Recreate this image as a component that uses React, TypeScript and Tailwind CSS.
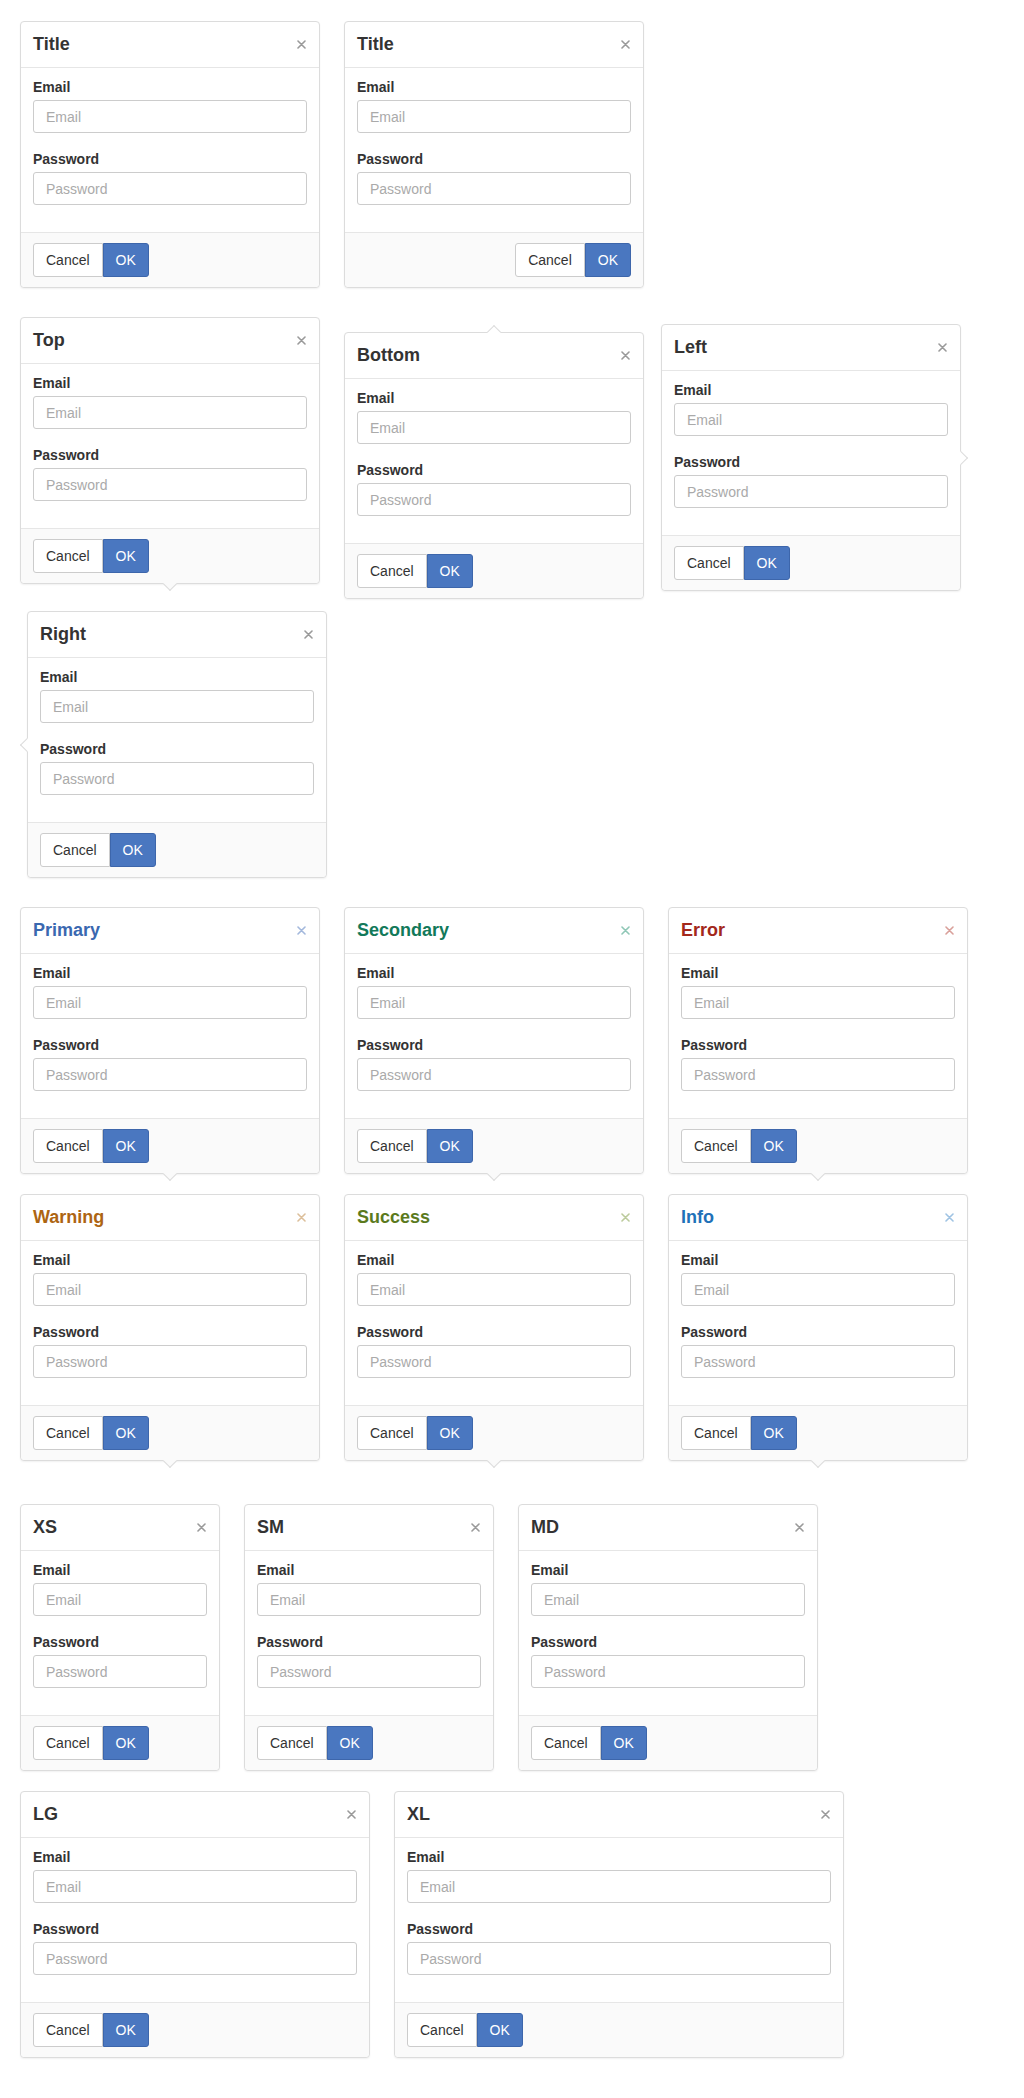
import React from 'react'

type Placement = 'none' | 'top' | 'bottom' | 'left' | 'right'
type Tone = 'default' | 'primary' | 'secondary' | 'error' | 'warning' | 'success' | 'info'

const toneStyles: Record<Tone, { title: string; close: string }> = {
  default: { title: 'text-[#333333]', close: 'text-[#9a9a9a]' },
  primary: { title: 'text-[#3a68b0]', close: 'text-[#a3b8dc]' },
  secondary: { title: 'text-[#12795a]', close: 'text-[#8fc7b6]' },
  error: { title: 'text-[#a3281b]', close: 'text-[#d9a09a]' },
  warning: { title: 'text-[#ad6512]', close: 'text-[#dcbf9b]' },
  success: { title: 'text-[#5b7a1d]', close: 'text-[#bccb9c]' },
  info: { title: 'text-[#1f71b8]', close: 'text-[#9fc3e3]' },
}

// offsets that leave room for the arrow, like a placed popover
const placementMargin: Record<Placement, string> = {
  none: '',
  top: '-mt-[7px] mb-[7px]',
  bottom: 'mt-[8px] -mb-[8px]',
  left: '-ml-[7px] mr-[7px]',
  right: 'ml-[7px] -mr-[7px]',
}

function Arrow({ placement }: { placement: Placement }) {
  if (placement === 'top') {
    return (
      <span className="absolute left-1/2 -bottom-[6px] w-[10px] h-[10px] -translate-x-1/2 rotate-45 bg-[#fafafa] border-r border-b border-[#dcdcdc]" />
    )
  }
  if (placement === 'bottom') {
    return (
      <span className="absolute left-1/2 -top-[6px] w-[10px] h-[10px] -translate-x-1/2 rotate-45 bg-white border-l border-t border-[#dcdcdc]" />
    )
  }
  if (placement === 'left') {
    return (
      <span className="absolute top-1/2 -right-[6px] w-[10px] h-[10px] -translate-y-1/2 rotate-45 bg-white border-t border-r border-[#dcdcdc]" />
    )
  }
  if (placement === 'right') {
    return (
      <span className="absolute top-1/2 -left-[6px] w-[10px] h-[10px] -translate-y-1/2 rotate-45 bg-white border-b border-l border-[#dcdcdc]" />
    )
  }
  return null
}

function CloseIcon({ className }: { className: string }) {
  return (
    <svg className={className} width="9" height="9" viewBox="0 0 9 9" fill="none">
      <path d="M1 1L8 8M8 1L1 8" stroke="currentColor" strokeWidth="1.6" strokeLinecap="round" />
    </svg>
  )
}

function Field({ label, placeholder, type }: { label: string; placeholder: string; type: string }) {
  return (
    <div>
      <label className="block text-[14px] leading-[18px] font-bold text-[#333333] mb-[4px]">{label}</label>
      <input
        type={type}
        placeholder={placeholder}
        className="block w-full h-[33px] px-[12px] border border-[#cccccc] rounded-[3px] bg-white text-[14px] text-[#333333] placeholder:text-[#aaaaaa] outline-none"
      />
    </div>
  )
}

interface PopoverProps {
  title: string
  width?: string
  placement?: Placement
  tone?: Tone
  footerEnd?: boolean
}

function Popover({ title, width = 'w-[300px]', placement = 'none', tone = 'default', footerEnd = false }: PopoverProps) {
  const t = toneStyles[tone]
  return (
    <div
      className={`relative ${width} ${placementMargin[placement]} shrink-0 bg-white border border-[#dcdcdc] rounded-[4px] shadow-[0_1px_2px_rgba(0,0,0,0.06)]`}
    >
      <div className="h-[46px] px-[12px] flex items-center justify-between border-b border-[#e6e6e6]">
        <h3 className={`text-[18px] font-bold ${t.title}`}>{title}</h3>
        <CloseIcon className={`${t.close} mr-[1px]`} />
      </div>
      <div className="px-[12px] pt-[10px] pb-[27px] flex flex-col gap-[17px]">
        <Field label="Email" placeholder="Email" type="email" />
        <Field label="Password" placeholder="Password" type="password" />
      </div>
      <div
        className={`flex ${footerEnd ? 'justify-end' : 'justify-start'} px-[12px] py-[10px] bg-[#fafafa] border-t border-[#e6e6e6] rounded-b-[4px]`}
      >
        <button className="h-[34px] px-[12px] text-[14px] text-[#333333] bg-white border border-[#cccccc] rounded-l-[3px]">
          Cancel
        </button>
        <button className="h-[34px] px-[12px] text-[14px] text-white bg-[#4a77c0] border border-[#3d66ab] rounded-r-[3px]">
          OK
        </button>
      </div>
      <Arrow placement={placement} />
    </div>
  )
}

export default function App() {
  return (
    <div className="min-h-[2098px] bg-white pt-[21px] pl-[20px] pb-[40px] flex flex-col gap-[36px] font-['Liberation_Sans',Arial,sans-serif]">
      <section className="flex flex-wrap gap-x-[24px] gap-y-[20px]">
        <Popover title="Title" />
        <Popover title="Title" footerEnd />
      </section>

      <section className="flex flex-wrap items-start gap-x-[24px] gap-y-[20px]">
        <Popover title="Top" placement="top" />
        <Popover title="Bottom" placement="bottom" />
        <Popover title="Left" placement="left" />
        <Popover title="Right" placement="right" />
      </section>

      <section className="flex flex-wrap items-start gap-x-[24px] gap-y-[20px]">
        <Popover title="Primary" placement="top" tone="primary" />
        <Popover title="Secondary" placement="top" tone="secondary" />
        <Popover title="Error" placement="top" tone="error" />
        <Popover title="Warning" placement="top" tone="warning" />
        <Popover title="Success" placement="top" tone="success" />
        <Popover title="Info" placement="top" tone="info" />
      </section>

      <section className="flex flex-wrap items-start gap-x-[24px] gap-y-[20px]">
        <Popover title="XS" width="w-[200px]" />
        <Popover title="SM" width="w-[250px]" />
        <Popover title="MD" width="w-[300px]" />
        <Popover title="LG" width="w-[350px]" />
        <Popover title="XL" width="w-[450px]" />
      </section>
    </div>
  )
}
